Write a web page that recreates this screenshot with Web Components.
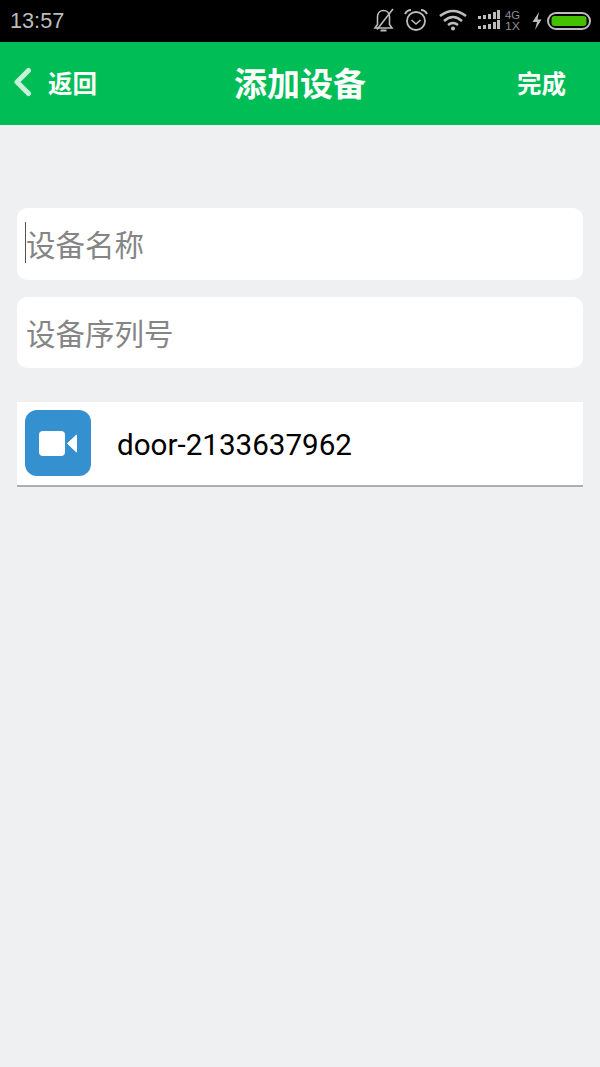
<!DOCTYPE html>
<html lang="zh">
<head>
<meta charset="utf-8">
<style>
html, body { margin: 0; height: 100%; }
body { background: #eff0f2; font-family: "Roboto", "Noto Sans CJK SC", sans-serif; }
</style>
</head>
<body>
<add-device-page>
  <status-bar time="13:57"></status-bar>
  <title-bar back="返回" title="添加设备" action="完成"></title-bar>
  <form-box>
    <text-field class="a" placeholder="设备名称" caret></text-field>
    <text-field class="b" placeholder="设备序列号"></text-field>
  </form-box>
  <device-row name="door-2133637962"></device-row>
</add-device-page>

<script>
const pageTemplate = document.createElement('template')
pageTemplate.innerHTML = `
<style>
:host { display: flex; flex-direction: column; height: 1067px; overflow: hidden; background: #eff0f2; }
</style>
<slot></slot>
`
class AddDevicePage extends HTMLElement {
  constructor() {
    super()
    this.attachShadow({ mode: 'open' }).appendChild(pageTemplate.content.cloneNode(true))
  }
}
customElements.define('add-device-page', AddDevicePage)

const statusTemplate = document.createElement('template')
statusTemplate.innerHTML = `
<style>
:host { display: flex; align-items: center; height: 42px; background: #000; color: #bdbdbd; padding: 0 8px 0 10px; box-sizing: border-box; flex: none; }
#time { font: 21.7px "Liberation Sans", sans-serif; flex: 1; }
#icons { display: flex; align-items: center; }
svg { display: block; }
</style>
<div id="time"></div>
<div id="icons">
  <svg width="232" height="42" viewBox="0 0 232 42" fill="none" stroke="#bdbdbd">
    <!-- muted bell -->
    <path d="M15 28 H32 L29.5 24.5 V17 C29.5 12.5 26.5 10.5 23.5 10.5 C20.5 10.5 17.5 12.5 17.5 17 V24.5 Z" stroke-width="1.6"/>
    <path d="M20.5 30.5 H26.5" stroke-width="2"/>
    <path d="M17 29.5 L33 9" stroke-width="1.6"/>
    <!-- alarm -->
    <circle cx="56" cy="21" r="9" stroke-width="1.8"/>
    <path d="M51.5 20 L56 24 L60.5 20" stroke-width="1.6"/>
    <path d="M45 14 Q47 10 51 10 M61 10 Q65 10 67 14" stroke-width="2"/>
    <!-- wifi -->
    <path d="M80 16 Q93 6 106 16" stroke-width="2.6"/>
    <path d="M84 21 Q93 13 102 21" stroke-width="2.6"/>
    <path d="M88 25 Q93 21 98 25" stroke-width="2.4"/>
    <circle cx="93" cy="28.5" r="2" fill="#bdbdbd" stroke="none"/>
    <!-- signal bars -->
    <g fill="#bdbdbd" stroke="none">
      <rect x="118" y="16" width="3" height="3"/><rect x="123" y="15" width="3" height="4"/><rect x="128" y="14" width="3" height="5"/><rect x="133" y="12" width="3" height="7"/><rect x="137" y="10" width="3" height="9"/>
      <rect x="118" y="26" width="3" height="3"/><rect x="123" y="25" width="3" height="4"/><rect x="128" y="24" width="3" height="5"/><rect x="133" y="22" width="3" height="7"/><rect x="137" y="20" width="3" height="9"/>
    </g>
    <text x="145" y="19" font-family="Liberation Sans, sans-serif" font-size="10.5" textLength="15" lengthAdjust="spacingAndGlyphs" fill="#8f8f8f" stroke="none">4G</text>
    <text x="145" y="30" font-family="Liberation Sans, sans-serif" font-size="10.5" textLength="15" lengthAdjust="spacingAndGlyphs" fill="#8f8f8f" stroke="none">1X</text>
    <!-- charge bolt -->
    <path d="M179 12 L172.5 22 H177 L175 30 L181.5 19.5 H177.5 Z" fill="#bdbdbd" stroke="none"/>
    <!-- battery -->
    <rect x="188" y="13" width="42" height="16" rx="8" stroke-width="2"/>
    <rect x="191.5" y="16" width="35" height="10" rx="3" fill="#44c000" stroke="none"/>
  </svg>
</div>
`
class StatusBar extends HTMLElement {
  constructor() {
    super()
    this.attachShadow({ mode: 'open' }).appendChild(statusTemplate.content.cloneNode(true))
  }
  connectedCallback() {
    this.shadowRoot.querySelector('#time').textContent = this.getAttribute('time')
  }
}
customElements.define('status-bar', StatusBar)

const titleTemplate = document.createElement('template')
titleTemplate.innerHTML = `
<style>
:host { display: grid; grid-template-columns: 1fr auto 1fr; align-items: center; height: 83px; padding-bottom: 3px; box-sizing: border-box; background: #00bd56; color: #fff; flex: none; font-family: "Noto Sans CJK SC", sans-serif; font-weight: 700; }
#back { display: flex; align-items: center; padding-left: 13px; font-size: 24.5px; }
#back svg { display: block; margin-right: 16px; }
#title { font-size: 33px; }
#action { justify-self: end; padding-right: 34px; font-size: 24.5px; }
</style>
<div id="back">
  <svg width="19" height="30" viewBox="0 0 19 30" fill="none"><path d="M15.5 3.5 L4 15 L15.5 26.5" stroke="#c9f0da" stroke-width="5" stroke-linecap="round" stroke-linejoin="round"/></svg>
  <span id="b"></span>
</div>
<div id="title"></div>
<div id="action"></div>
`
class TitleBar extends HTMLElement {
  constructor() {
    super()
    this.attachShadow({ mode: 'open' }).appendChild(titleTemplate.content.cloneNode(true))
  }
  connectedCallback() {
    this.shadowRoot.querySelector('#b').textContent = this.getAttribute('back')
    this.shadowRoot.querySelector('#title').textContent = this.getAttribute('title')
    this.shadowRoot.querySelector('#action').textContent = this.getAttribute('action')
  }
}
customElements.define('title-bar', TitleBar)

const formTemplate = document.createElement('template')
formTemplate.innerHTML = `
<style>
:host { display: flex; flex-direction: column; gap: 17px; padding: 83px 17px 0 17px; flex: none; }
</style>
<slot></slot>
`
class FormBox extends HTMLElement {
  constructor() {
    super()
    this.attachShadow({ mode: 'open' }).appendChild(formTemplate.content.cloneNode(true))
  }
}
customElements.define('form-box', FormBox)

const fieldTemplate = document.createElement('template')
fieldTemplate.innerHTML = `
<style>
:host { display: flex; align-items: center; height: 72px; box-sizing: border-box; background: #fff; border-radius: 10px; padding: 0 0 2px 9px; font: 29.5px "Noto Sans CJK SC", sans-serif; color: #858585; }
:host(.b) { height: 71px; }
#text { position: relative; }
#caret { display: none; position: absolute; left: -1px; top: 50%; height: 41px; margin-top: -21px; width: 1px; background: #555; }
:host([caret]) #caret { display: block; }
</style>
<div id="text"><span id="caret"></span><span id="p"></span></div>
`
class TextField extends HTMLElement {
  constructor() {
    super()
    this.attachShadow({ mode: 'open' }).appendChild(fieldTemplate.content.cloneNode(true))
  }
  connectedCallback() {
    this.shadowRoot.querySelector('#p').textContent = this.getAttribute('placeholder')
  }
}
customElements.define('text-field', TextField)

const rowTemplate = document.createElement('template')
rowTemplate.innerHTML = `
<style>
:host { display: flex; align-items: center; height: 85px; margin: 34px 17px 0 17px; padding: 0 0 1px 8px; box-sizing: border-box; background: #fff; border-bottom: 2px solid #aeaeae; flex: none; }
#icon { width: 66px; height: 66px; border-radius: 12px; background: #3590d0; display: flex; align-items: center; justify-content: center; flex: none; }
#name { margin-left: 26px; font: 29.6px "Roboto", sans-serif; color: #000; padding-top: 4px; }
svg { display: block; }
</style>
<div id="icon">
  <svg width="38" height="25" viewBox="0 0 38 25"><rect x="0" y="0" width="26" height="25" rx="4" fill="#fff"/><path d="M28.5 12.5 L37.5 4 V21 Z" fill="#fff" stroke="#fff" stroke-width="1" stroke-linejoin="round"/></svg>
</div>
<div id="name"></div>
`
class DeviceRow extends HTMLElement {
  constructor() {
    super()
    this.attachShadow({ mode: 'open' }).appendChild(rowTemplate.content.cloneNode(true))
  }
  connectedCallback() {
    this.shadowRoot.querySelector('#name').textContent = this.getAttribute('name')
  }
}
customElements.define('device-row', DeviceRow)
</script>
</body>
</html>
